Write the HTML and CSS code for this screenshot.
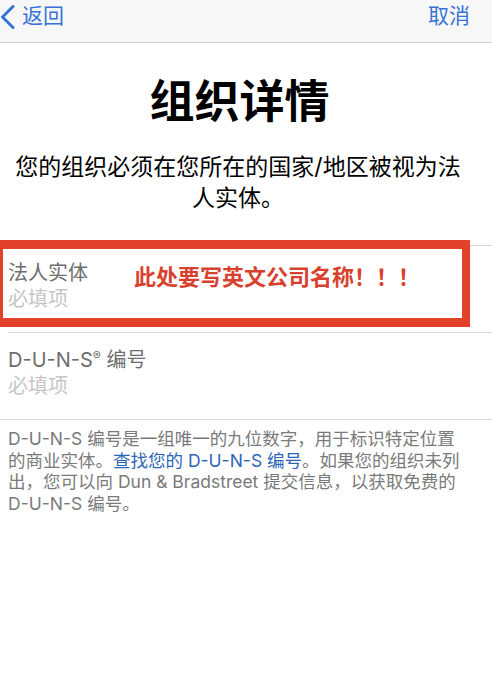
FILE: index.html
```html
<html>
<head>
<meta charset="utf-8">
<meta name="viewport" content="width=device-width, initial-scale=1">
<link rel="stylesheet" href="styles.css">
</head>
<body>
	<div class="navbar">
		<a class="nav-back" href="#">
			<svg class="chevron" width="16" height="24" viewBox="0 0 16 24"><polyline points="13,1.5 2.5,12 13,22.5" fill="none" stroke="currentColor" stroke-width="3" stroke-linecap="round" stroke-linejoin="round"/></svg>
			<span>返回</span>
		</a>
		<a class="nav-cancel" href="#">取消</a>
	</div>

	<div class="page">
		<h1>组织详情</h1>
		<p class="lead">您的组织必须在您所在的国家/地区被视为法人实体。</p>

		<div class="fields">
			<div class="field marked">
				<div class="field-text">
					<label>法人实体</label>
					<span class="placeholder">必填项</span>
				</div>
				<span class="mark-note">此处要写英文公司名称！！！</span>
			</div>
			<div class="field">
				<div class="field-text">
					<label>D-U-N-S<sup>®</sup> 编号</label>
					<span class="placeholder">必填项</span>
				</div>
			</div>
		</div>

		<p class="note">D-U-N-S 编号是一组唯一的九位数字，用于标识特定位置的商业实体。<a href="#">查找您的 D-U-N-S 编号</a>。如果您的组织未列出，您可以向 Dun &amp; Bradstreet 提交信息，以获取免费的 D-U-N-S 编号。</p>
	</div>
</body>
</html>
```

FILE: styles.css
```css
*,
*:before,
*:after {
	box-sizing: border-box;
}
body {
	margin: 0;
	background: #fff;
	color: #000;
	font-family: Inter, "Noto Sans CJK SC", sans-serif;
}
a {
	text-decoration: none;
}

/* top bar */
.navbar {
	height: 43px;
	display: flex;
	align-items: center;
	justify-content: space-between;
	padding: 0 22px 0 0;
	background: #f7f7f7;
	border-bottom: 1px solid #d2d2d2;
}
.navbar a {
	color: #3574d6;
	font-size: 21px;
	line-height: 26px;
	display: flex;
	align-items: center;
	margin-top: -11px;
}
.nav-back {
	gap: 6px;
}
.chevron {
	display: block;
	margin-top: 2px;
}

/* heading */
h1 {
	margin: 32px 0 0;
	padding-right: 13px;
	font-size: 45px;
	line-height: 54px;
	font-weight: 700;
	text-align: center;
}
.lead {
	margin: 23px 0 0;
	padding: 0 22px 0 6px;
	font-size: 23px;
	line-height: 31px;
	text-align: center;
}

/* form rows */
.fields {
	margin-top: 31px;
	border-top: 1px solid #d8d8d8;
	border-bottom: 1px solid #d8d8d8;
}
.field {
	position: relative;
	display: flex;
	align-items: flex-start;
	padding: 14px 8px 20px;
}
.field + .field {
	margin-left: 8px;
	padding-left: 0;
	border-top: 1px solid #d8d8d8;
}
.field-text {
	display: flex;
	flex-direction: column;
	width: 126px;
}
.field label {
	font-size: 20px;
	line-height: 26px;
	color: #6e6e6e;
	white-space: nowrap;
}
.field sup {
	font-size: 12px;
	line-height: 0;
	vertical-align: 7px;
}
.placeholder {
	font-size: 20px;
	line-height: 26px;
	color: #c6c6c8;
}

.marked::before {
	content: "";
	position: absolute;
	top: -6px;
	left: -5px;
	width: 475px;
	height: 87px;
	border: 8px solid #e4412a;
	border-top-width: 9px;
	border-bottom-width: 9px;
}
.mark-note {
	margin-top: 4px;
	font-size: 22px;
	line-height: 26px;
	font-weight: 700;
	color: #d9412f;
	white-space: nowrap;
}

/* footer text */
.note {
	margin: 8px 0 0;
	padding: 0 20px 0 8px;
	font-size: 17.5px;
	line-height: 21.5px;
	color: #7a7a7a;
}
.note a {
	color: #2d65b6;
}
```
